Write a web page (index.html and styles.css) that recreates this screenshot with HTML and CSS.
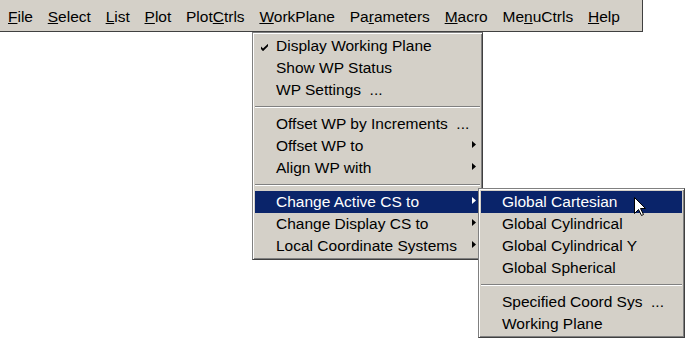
FILE: index.html
```html
<!DOCTYPE html>
<html lang="en">
<head>
	<meta charset="UTF-8">
	<title>WorkPlane menu</title>
	<link rel="stylesheet" href="styles.css">
</head>
<body>
	<div class="menubar">
		<span class="item"><u>F</u>ile</span>
		<span class="item"><u>S</u>elect</span>
		<span class="item"><u>L</u>ist</span>
		<span class="item"><u>P</u>lot</span>
		<span class="item">Plot<u>C</u>trls</span>
		<span class="item"><u>W</u>orkPlane</span>
		<span class="item">Pa<u>r</u>ameters</span>
		<span class="item"><u>M</u>acro</span>
		<span class="item">Me<u>n</u>uCtrls</span>
		<span class="item"><u>H</u>elp</span>
	</div>

	<!-- WorkPlane dropdown -->
	<div class="menu menuWP">
		<div class="fila">
			<span class="marca"><svg class="check" width="7" height="7" viewBox="0 0 7 7"><polygon points="0,2.6 2,4.6 7,-0.2 7,2.3 2,7.2 0,5"/></svg></span>
			<span class="texto">Display Working Plane</span>
		</div>
		<div class="fila"><span class="marca"></span><span class="texto">Show WP Status</span></div>
		<div class="fila"><span class="marca"></span><span class="texto">WP Settings&nbsp; ...</span></div>
		<div class="sep"></div>
		<div class="fila"><span class="marca"></span><span class="texto">Offset WP by Increments&nbsp; ...</span></div>
		<div class="fila"><span class="marca"></span><span class="texto">Offset WP to</span><svg class="flecha" viewBox="0 0 4 7"><polygon points="0,0 4,3.5 0,7"/></svg></div>
		<div class="fila"><span class="marca"></span><span class="texto">Align WP with</span><svg class="flecha" viewBox="0 0 4 7"><polygon points="0,0 4,3.5 0,7"/></svg></div>
		<div class="sep"></div>
		<div class="fila activa"><span class="marca"></span><span class="texto">Change Active CS to</span><svg class="flecha" viewBox="0 0 4 7"><polygon points="0,0 4,3.5 0,7"/></svg></div>
		<div class="fila"><span class="marca"></span><span class="texto">Change Display CS to</span><svg class="flecha" viewBox="0 0 4 7"><polygon points="0,0 4,3.5 0,7"/></svg></div>
		<div class="fila"><span class="marca"></span><span class="texto">Local Coordinate Systems</span><svg class="flecha" viewBox="0 0 4 7"><polygon points="0,0 4,3.5 0,7"/></svg></div>
	</div>

	<!-- Change Active CS to submenu -->
	<div class="menu menuCS">
		<div class="fila activa"><span class="marca"></span><span class="texto">Global Cartesian</span></div>
		<div class="fila"><span class="marca"></span><span class="texto">Global Cylindrical</span></div>
		<div class="fila"><span class="marca"></span><span class="texto">Global Cylindrical Y</span></div>
		<div class="fila"><span class="marca"></span><span class="texto">Global Spherical</span></div>
		<div class="sep"></div>
		<div class="fila"><span class="marca"></span><span class="texto">Specified Coord Sys&nbsp; ...</span></div>
		<div class="fila"><span class="marca"></span><span class="texto">Working Plane</span></div>
	</div>

	<svg class="cursor" width="13" height="20" viewBox="0 0 13 20">
		<path d="M0.5 0.5 L0.5 16.5 L4.5 12.5 L7.5 18.5 L9.5 17.5 L6.5 11.5 L11.5 11.5 Z" fill="#fff" stroke="#000" stroke-width="1"/>
	</svg>
</body>
</html>
```

FILE: styles.css
```css
*{
	margin:0;
	padding:0;
	box-sizing: border-box;
}
body{
	font-family: "Liberation Sans", Arial, sans-serif;
	font-size: 15.5px;
	color: #000;
	background: #fff;
	position: relative;
	width: 685px;
	height: 338px;
	overflow: hidden;
}
.menubar{
	display: flex;
	width: 643px;
	height: 32px;
	padding-left: 0.6px;
	background: #d4d0c8;
	border-right: 1px solid #404040;
	border-bottom: 1px solid #404040;
}
.menubar .item{
	padding: 6px 7.4px 3px;
	line-height: 22px;
	white-space: nowrap;
}
.menu{
	position: absolute;
	background: #d4d0c8;
	border: 1px solid;
	border-color: #808080 #404040 #404040 #808080;
	padding: 2px;
	box-shadow: inset 1px 1px #fff, inset -1px -1px #808080;
}
.menuWP{
	left: 252px;
	top: 32px;
	width: 231px;
}
.menuCS{
	left: 478px;
	top: 188px;
	width: 207px;
}
.fila{
	display: flex;
	height: 22px;
	line-height: 22px;
	white-space: nowrap;
}
.fila.activa{
	background: #0a246a;
	color: #fff;
}
.marca{
	width: 21px;
	flex: none;
}
.check{
	display: block;
	margin: 9px 0 0 6px;
	fill: #000;
}
.texto{
	flex: 1;
}
.flecha{
	width: 4px;
	height: 7px;
	margin: 6px 4px 0 0;
	fill: #000;
}
.fila.activa .flecha{
	fill: #fff;
}
.sep{
	height: 2px;
	margin: 5px 0;
	border-top: 1px solid #808080;
	border-bottom: 1px solid #fff;
}
.cursor{
	position: absolute;
	left: 634px;
	top: 197px;
}
```
